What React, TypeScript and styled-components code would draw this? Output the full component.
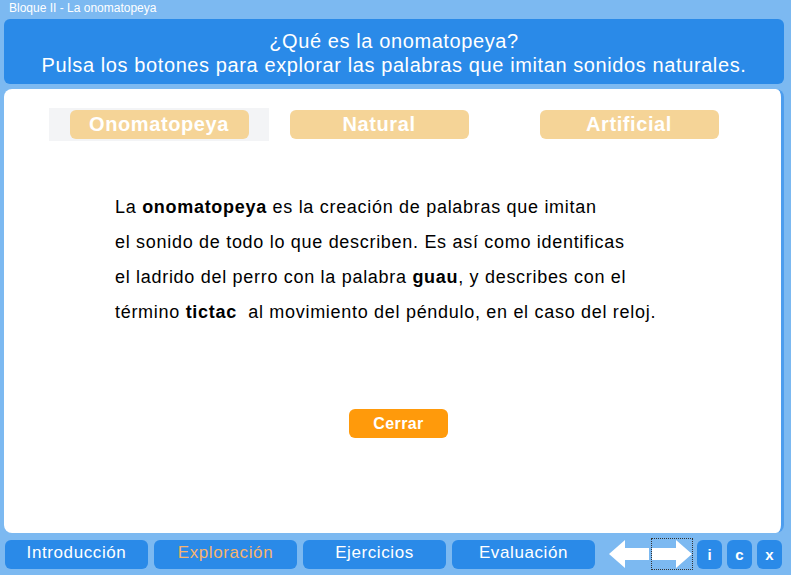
import React from 'react';
import styled, { createGlobalStyle } from 'styled-components';

const Global = createGlobalStyle`
  html, body { margin: 0; padding: 0; }
  body { font-family: "Liberation Sans", Arial, sans-serif; background: #7cb9f1; }
`;

const Frame = styled.div`
  width: 791px;
  height: 575px;
  background: #7cb9f1;
  display: flex;
  flex-direction: column;
  overflow: hidden;
`;

const TitleBar = styled.div`
  height: 19px;
  line-height: 17px;
  padding-left: 9px;
  color: #fff;
  font-size: 12px;
`;

const Header = styled.div`
  margin: 0 7px 0 4px;
  height: 65px;
  background: #2a8ae8;
  border-radius: 6px;
  color: #fff;
  font-size: 20px;
  letter-spacing: 0.6px;
  line-height: 24px;
  text-align: center;
  display: flex;
  flex-direction: column;
  justify-content: center;
  padding-top: 2px;
  box-sizing: border-box;
`;

const Panel = styled.div`
  margin: 5px 7px 0 4px;
  height: 444px;
  background: #fff;
  border-radius: 8px;
  border-right: 3px solid #4d9ded;
  display: flex;
  flex-direction: column;
`;

const TabRow = styled.div`
  display: flex;
  align-items: center;
  padding: 19px 0 0 45px;
`;

const TabSlot = styled.div<{ $active?: boolean; $gap: number }>`
  width: 220px;
  height: 33px;
  margin-right: ${(p) => p.$gap}px;
  background: ${(p) => (p.$active ? '#f3f4f6' : 'transparent')};
  display: flex;
  align-items: center;
  justify-content: center;
`;

const Tab = styled.div`
  width: 179px;
  height: 29px;
  background: #f5d497;
  border-radius: 6px;
  color: #fff;
  font-weight: bold;
  font-size: 20px;
  letter-spacing: 0.6px;
  line-height: 29px;
  text-align: center;
`;

const Body = styled.div`
  padding: 49px 0 0 111px;
  font-size: 18px;
  letter-spacing: 0.7px;
  line-height: 35px;
  color: #000;
`;

const CloseRow = styled.div`
  display: flex;
  justify-content: center;
  margin-top: 79px;
  padding-left: 12px;
`;

const CloseButton = styled.div`
  width: 99px;
  height: 29px;
  background: #ff9a0b;
  border-radius: 6px;
  color: #fff;
  font-weight: bold;
  font-size: 16px;
  letter-spacing: 0.4px;
  line-height: 29px;
  text-align: center;
`;

const Nav = styled.div`
  display: flex;
  align-items: center;
  padding: 6px 0 0 5px;
  height: 30px;
`;

const NavButton = styled.div<{ $current?: boolean }>`
  width: 143px;
  height: 29px;
  margin-right: 6px;
  background: #2a8ae8;
  border-radius: 6px;
  color: ${(p) => (p.$current ? '#f7b46e' : '#fff')};
  font-size: 17px;
  letter-spacing: 0.6px;
  line-height: 26px;
  text-align: center;
`;

const Arrow = styled.div<{ $focus?: boolean }>`
  width: 40px;
  height: 30px;
  display: flex;
  align-items: center;
  justify-content: center;
  box-sizing: border-box;
  outline: ${(p) => (p.$focus ? '1px dotted #333' : 'none')};
  margin-left: ${(p) => (p.$focus ? 3 : 8)}px;
`;

const SmallButton = styled.div`
  width: 25px;
  height: 29px;
  margin-left: 5px;
  background: #2a8ae8;
  border-radius: 6px;
  color: #fff;
  font-weight: bold;
  font-size: 15px;
  line-height: 29px;
  text-align: center;
`;

const ArrowIcon = ({ dir }: { dir: 'left' | 'right' }) => (
  <svg width="40" height="30" viewBox="0 0 40 30">
    <path
      d="M0 15 L16 1 L16 9 L40 9 L40 21 L16 21 L16 29 Z"
      fill="#fff"
      transform={dir === 'right' ? 'translate(40 0) scale(-1 1)' : undefined}
    />
  </svg>
);

export default function App() {
  return (
    <Frame>
      <Global />
      <TitleBar>Bloque II - La onomatopeya</TitleBar>
      <Header>
        <div>¿Qué es la onomatopeya?</div>
        <div>Pulsa los botones para explorar las palabras que imitan sonidos naturales.</div>
      </Header>
      <Panel>
        <TabRow>
          <TabSlot $active $gap={0}>
            <Tab>Onomatopeya</Tab>
          </TabSlot>
          <TabSlot $gap={30}>
            <Tab>Natural</Tab>
          </TabSlot>
          <TabSlot $gap={0}>
            <Tab>Artificial</Tab>
          </TabSlot>
        </TabRow>
        <Body>
          La <b>onomatopeya</b> es la creación de palabras que imitan
          <br />
          el sonido de todo lo que describen. Es así como identificas
          <br />
          el ladrido del perro con la palabra <b>guau</b>, y describes con el
          <br />
          término <b>tictac</b>&nbsp; al movimiento del péndulo, en el caso del reloj.
        </Body>
        <CloseRow>
          <CloseButton>Cerrar</CloseButton>
        </CloseRow>
      </Panel>
      <Nav>
        <NavButton>Introducción</NavButton>
        <NavButton $current>Exploración</NavButton>
        <NavButton>Ejercicios</NavButton>
        <NavButton>Evaluación</NavButton>
        <Arrow>
          <ArrowIcon dir="left" />
        </Arrow>
        <Arrow $focus>
          <ArrowIcon dir="right" />
        </Arrow>
        <SmallButton>i</SmallButton>
        <SmallButton>c</SmallButton>
        <SmallButton>x</SmallButton>
      </Nav>
    </Frame>
  );
}
